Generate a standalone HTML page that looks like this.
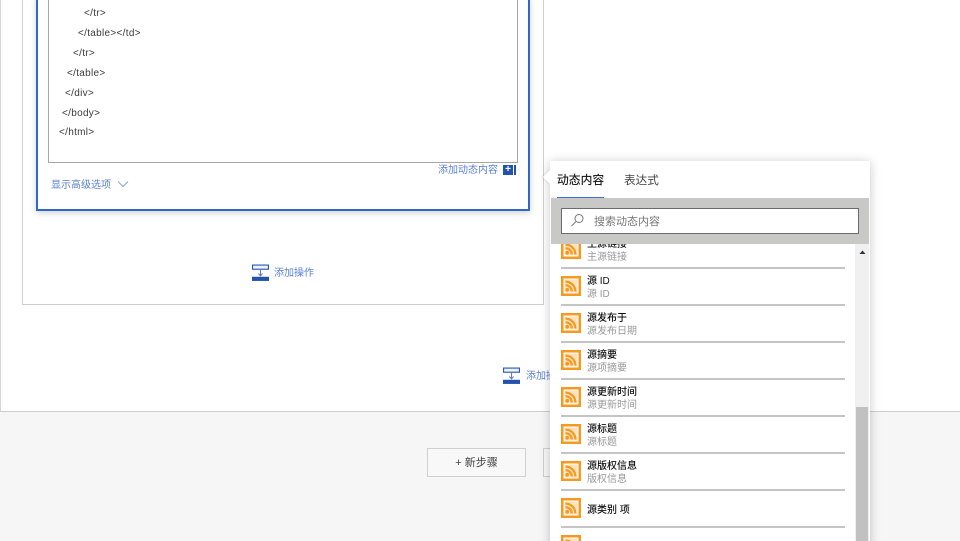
<!DOCTYPE html>
<html lang="zh">
<head>
<meta charset="utf-8">
<style>
html,body{margin:0;padding:0;width:960px;height:541px;overflow:hidden;background:#fff}
body{position:relative;font-family:"Liberation Sans","Noto Sans CJK SC",sans-serif}
.a{position:absolute}
.t{position:absolute;white-space:nowrap;line-height:14px;font-size:10px;color:#333}
.code{color:#3a3a3a;font-size:10px;letter-spacing:.3px}
.link{color:#5b80d6;font-size:10px}
.sep{position:absolute;left:11px;width:284px;height:1.4px;background:#c4c4c4}
.ttl{position:absolute;left:37px;font-size:10px;line-height:13px;color:#111;font-weight:500;white-space:nowrap}
.sub{position:absolute;left:37px;font-size:10px;line-height:13px;color:#999;white-space:nowrap}
.ic{position:absolute;left:11px;width:20px;height:20px}
</style>
</head>
<body>
<svg width="0" height="0" style="position:absolute">
<symbol id="rss" viewBox="0 0 20 20">
<rect width="20" height="20" fill="#f7991f"/>
<rect x="2.5" y="2.5" width="15" height="15" fill="#fff"/>
<rect x="3.5" y="3.5" width="13" height="13" fill="#fde3bd"/>
<circle cx="6.2" cy="13.8" r="1.9" fill="#f7991f"/>
<path d="M4.5 9.2a6.3 6.3 0 0 1 6.3 6.3M4.5 5.6a9.9 9.9 0 0 1 9.9 9.9" fill="none" stroke="#f7991f" stroke-width="2.2"/>
</symbol>
<symbol id="add" viewBox="0 0 18 18">
<rect x=".6" y=".6" width="16.8" height="4.4" fill="#eef3fb" stroke="#2b58b5" stroke-width="1.2"/>
<path d="M9 5v6.5M6.8 9.5 9 12l2.2-2.5" fill="none" stroke="#5f7fc4" stroke-width="1.1"/>
<rect y="13" width="18" height="4.4" fill="#2453ad"/>
</symbol>
</svg>

<!-- page frame -->
<div class="a" style="left:0;top:0;width:1px;height:411px;background:#d6d6d6"></div>
<div class="a" style="left:0;top:411px;width:960px;height:130px;background:#f6f6f6;border-top:1px solid #cfcfcf;box-sizing:border-box"></div>
<div class="a" style="left:22px;top:-2px;width:522px;height:307px;border:1px solid #cfcfcf;box-sizing:border-box"></div>

<!-- card -->
<div class="a" style="left:36px;top:-4px;width:494px;height:215px;background:#fff;border:2px solid #2f68c9;box-sizing:border-box;box-shadow:0 2px 6px rgba(0,0,0,.18)"></div>
<div class="a" style="left:48px;top:-3px;width:470px;height:166px;border:1px solid #a6a6a6;box-sizing:border-box"></div>

<div class="t code" style="left:84px;top:7px">&lt;/tr&gt;</div>
<div class="t code" style="left:78px;top:27px">&lt;/table&gt;&lt;/td&gt;</div>
<div class="t code" style="left:73px;top:47px">&lt;/tr&gt;</div>
<div class="t code" style="left:67px;top:67px">&lt;/table&gt;</div>
<div class="t code" style="left:65px;top:87px">&lt;/div&gt;</div>
<div class="t code" style="left:62px;top:107px">&lt;/body&gt;</div>
<div class="t code" style="left:59px;top:126px">&lt;/html&gt;</div>

<div class="t link" style="left:438px;top:164px">添加动态内容</div>
<div class="a" style="left:503px;top:165px;width:10px;height:10px;background:#2453ad;color:#fff;font-size:10px;line-height:10px;text-align:center;font-weight:bold">+</div>
<div class="a" style="left:514px;top:165px;width:2px;height:10px;background:#2453ad"></div>

<div class="t link" style="left:51px;top:179px">显示高级选项</div>
<svg class="a" style="left:117px;top:180px" width="12" height="8"><path d="M1 1.5 6 6.5 11 1.5" fill="none" stroke="#8f9fdc" stroke-width="1"/></svg>

<!-- add action -->
<svg class="a" style="left:252px;top:264px" width="17" height="18"><use href="#add"/></svg>
<div class="t link" style="left:274px;top:267px">添加操作</div>
<svg class="a" style="left:503px;top:367px" width="17" height="18"><use href="#add"/></svg>
<div class="t link" style="left:526px;top:370px">添加操作</div>

<!-- footer buttons -->
<div class="a" style="left:427px;top:448px;width:99px;height:29px;border:1px solid #d0d0d0;box-sizing:border-box;background:#f8f8f8;font-size:11px;line-height:29px;text-align:center;color:#444">+ 新步骤</div>
<div class="a" style="left:543px;top:448px;width:60px;height:29px;border:1px solid #d0d0d0;box-sizing:border-box;background:#f8f8f8"></div>

<!-- panel -->
<div class="a" style="left:550px;top:161px;width:320px;height:390px;background:#fff;box-shadow:0 1px 10px rgba(0,0,0,.22);overflow:hidden">
  <div class="a" style="left:0;top:78px;width:320px;height:312px">
    <svg class="ic" style="top:0"><use href="#rss"/></svg>
    <div class="ttl" style="top:-1px">主源链接</div><div class="sub" style="top:12px">主源链接</div><div class="sep" style="top:28.3px"></div>

    <svg class="ic" style="top:37px"><use href="#rss"/></svg>
    <div class="ttl" style="top:36px">源 ID</div><div class="sub" style="top:49px">源 ID</div><div class="sep" style="top:65.3px"></div>

    <svg class="ic" style="top:74px"><use href="#rss"/></svg>
    <div class="ttl" style="top:73px">源发布于</div><div class="sub" style="top:86px">源发布日期</div><div class="sep" style="top:102.3px"></div>

    <svg class="ic" style="top:111px"><use href="#rss"/></svg>
    <div class="ttl" style="top:110px">源摘要</div><div class="sub" style="top:123px">源项摘要</div><div class="sep" style="top:139.3px"></div>

    <svg class="ic" style="top:148px"><use href="#rss"/></svg>
    <div class="ttl" style="top:147px">源更新时间</div><div class="sub" style="top:160px">源更新时间</div><div class="sep" style="top:176.3px"></div>

    <svg class="ic" style="top:185px"><use href="#rss"/></svg>
    <div class="ttl" style="top:184px">源标题</div><div class="sub" style="top:197px">源标题</div><div class="sep" style="top:213.3px"></div>

    <svg class="ic" style="top:222px"><use href="#rss"/></svg>
    <div class="ttl" style="top:221px">源版权信息</div><div class="sub" style="top:234px">版权信息</div><div class="sep" style="top:250.3px"></div>

    <svg class="ic" style="top:259px"><use href="#rss"/></svg>
    <div class="ttl" style="top:265px">源类别 项</div><div class="sep" style="top:287.3px"></div>

    <svg class="ic" style="top:296px"><use href="#rss"/></svg>
  </div>

  <!-- scrollbar -->
  <div class="a" style="left:305px;top:83px;width:14px;height:307px;background:#f0f0f0"></div>
  <div class="a" style="left:306px;top:246px;width:12px;height:144px;background:#c1c1c1"></div>
  <svg class="a" style="left:308px;top:88px" width="9" height="6"><path d="M1.5 5 4.5 1.5 7.5 5z" fill="#333"/></svg>

  <!-- header -->
  <div class="a" style="left:0;top:0;width:320px;height:37px;background:#fff"></div>
  <div class="t" style="left:7px;top:12px;font-size:11.8px;color:#222;font-weight:500">动态内容</div>
  <div class="t" style="left:74px;top:13px;font-size:11.6px;color:#444">表达式</div>
  <div class="a" style="left:1px;top:37px;width:318px;height:46px;background:#c8c9c6"></div>
  <div class="a" style="left:7px;top:35.5px;width:47px;height:1.5px;background:#3f6fd8"></div>
  <div class="a" style="left:11px;top:47px;width:298px;height:26px;background:#fff;border:1px solid #6b6b6b;box-sizing:border-box"></div>
  <svg class="a" style="left:20px;top:52px" width="15" height="15"><circle cx="9" cy="5.5" r="4" fill="none" stroke="#777"/><path d="M6 8.5 1.5 13" stroke="#777" fill="none"/></svg>
  <div class="t" style="left:44px;top:54px;font-size:11px;color:#777">搜索动态内容</div>
</div>
<!-- panel beak -->
<div class="a" style="left:545px;top:172px;width:10px;height:10px;background:#fff;transform:rotate(45deg);box-shadow:-1px 1px 2px rgba(0,0,0,.1)"></div>
</body>
</html>
